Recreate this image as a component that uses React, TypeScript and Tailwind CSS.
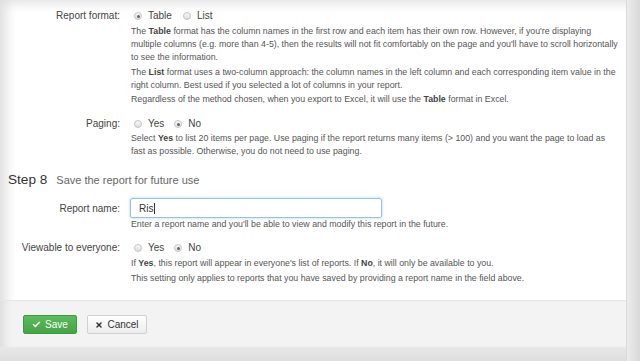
import { Check, X } from "lucide-react";

function Radio({ checked, label }: { checked?: boolean; label: string }) {
    return (
        <label className="flex items-center gap-[6px]">
            <span className="flex h-[8px] w-[8px] items-center justify-center rounded-full border border-[#c4c4c4] bg-gradient-to-b from-[#fafafa] to-[#dcdcdc]">
                {checked && <span className="h-[3px] w-[3px] rounded-full bg-[#666]" />}
            </span>
            <span>{label}</span>
        </label>
    );
}

function Row({ label, children }: { label: string; children: React.ReactNode }) {
    return (
        <div className="grid grid-cols-[120px_1fr] gap-x-[11px]">
            <div className="text-right text-[10px] leading-[14px] text-[#444]">{label}</div>
            <div>{children}</div>
        </div>
    );
}

export default function App() {
    return (
        <div
            className="flex h-[361px] w-[640px] overflow-hidden bg-[#e4e4e4] text-[#555]"
            style={{ fontFamily: '"Liberation Sans", Arial, sans-serif' }}
        >
            <div className="flex w-[626px] flex-col">
                <div className="flex-1 bg-white pt-[9px] shadow-[inset_12px_9px_12px_-6px_rgba(0,0,0,0.13)]">
                    <Row label="Report format:">
                        <div className="ml-[3px] flex gap-[11px] text-[10px] leading-[14px] text-[#444]">
                            <Radio checked label="Table" />
                            <Radio label="List" />
                        </div>
                        <div className="mt-[2px] pr-[8px] text-[8.8px] leading-[13px]">
                            <p className="mb-[1.5px]">
                                The <b className="text-[#444]">Table</b> format has the column names in the first row and each item has their own row. However, if you're displaying multiple columns (e.g. more than 4-5), then the results will not fit comfortably on the page and you'll have to scroll horizontally to see the information.
                            </p>
                            <p className="mb-[1.5px]">
                                The <b className="text-[#444]">List</b> format uses a two-column approach: the column names in the left column and each corresponding item value in the right column. Best used if you selected a lot of columns in your report.
                            </p>
                            <p>
                                Regardless of the method chosen, when you export to Excel, it will use the <b className="text-[#444]">Table</b> format in Excel.
                            </p>
                        </div>
                    </Row>

                    <div className="mt-[11px]">
                        <Row label="Paging:">
                            <div className="ml-[3px] flex gap-[10px] text-[10px] leading-[14px] text-[#444]">
                                <Radio label="Yes" />
                                <Radio checked label="No" />
                            </div>
                            <p className="mt-[1px] pr-[8px] text-[8.8px] leading-[13px]">
                                Select <b className="text-[#444]">Yes</b> to list 20 items per page. Use paging if the report returns many items (&gt; 100) and you want the page to load as fast as possible. Otherwise, you do not need to use paging.
                            </p>
                        </Row>
                    </div>

                    <div className="mt-[13px] flex items-baseline gap-[9px] pl-[8px] leading-[18px]">
                        <span className="text-[13.6px] text-[#333]">Step 8</span>
                        <span className="text-[11px] text-[#666]">Save the report for future use</span>
                    </div>

                    <div className="mt-[9px]">
                        <div className="grid grid-cols-[120px_1fr] gap-x-[10px]">
                            <div className="flex h-[20px] items-center justify-end text-[10px] text-[#444]">Report name:</div>
                            <div>
                                <div className="flex h-[20px] w-[252px] items-center rounded-[2px] border border-[#9cc0e2] px-[8px] text-[10px] text-[#333] shadow-[0_0_3px_rgba(102,160,220,0.5)]">
                                    Ris<span className="ml-[1px] h-[11px] w-px bg-[#333]" />
                                </div>
                                <p className="ml-[1px] text-[8.8px] leading-[13px]">
                                    Enter a report name and you'll be able to view and modify this report in the future.
                                </p>
                            </div>
                        </div>
                    </div>

                    <div className="mt-[10px]">
                        <Row label="Viewable to everyone:">
                            <div className="ml-[3px] flex gap-[10px] text-[10px] leading-[14px] text-[#444]">
                                <Radio label="Yes" />
                                <Radio checked label="No" />
                            </div>
                            <div className="mt-[2px] pr-[8px] text-[8.8px] leading-[13px]">
                                <p className="mb-[2px]">
                                    If <b className="text-[#444]">Yes</b>, this report will appear in everyone's list of reports. If <b className="text-[#444]">No</b>, it will only be available to you.
                                </p>
                                <p>This setting only applies to reports that you have saved by providing a report name in the field above.</p>
                            </div>
                        </Row>
                    </div>
                </div>

                <div className="flex h-[47px] gap-[10px] border-t border-[#e6e6e6] bg-[#f3f3f3] pl-[23px] pt-[14px] shadow-[inset_10px_0_10px_-6px_rgba(0,0,0,0.1)]">
                    <button className="flex h-[19px] w-[54px] items-center justify-center gap-[4px] rounded-[2px] border border-[#3e9a3e] bg-gradient-to-b from-[#5cbb5c] to-[#45a445] text-[10px] text-white">
                        <Check size={9} strokeWidth={4} />
                        Save
                    </button>
                    <button className="flex h-[19px] w-[60px] items-center justify-center gap-[4px] rounded-[2px] border border-[#d0d0d0] bg-gradient-to-b from-white to-[#ececec] text-[10px] text-[#333]">
                        <X size={8} strokeWidth={4.5} />
                        Cancel
                    </button>
                </div>
                <div className="h-[14px] bg-gradient-to-b from-[#e8e8e8] to-[#dedede]" />
            </div>
            <div className="w-[14px] border-l border-[#dadada] bg-gradient-to-r from-[#ececec] to-[#d8d8d8]" />
        </div>
    );
}
